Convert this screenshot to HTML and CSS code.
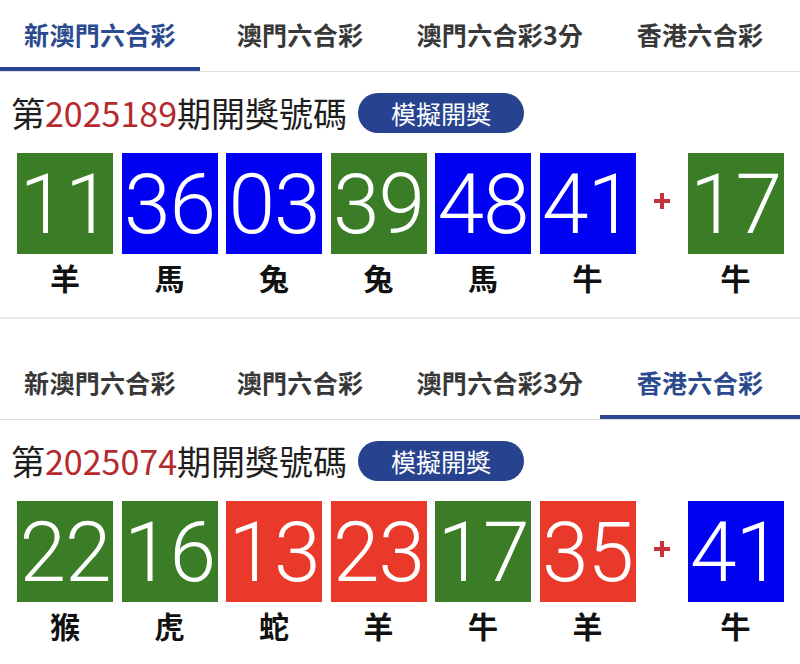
FILE: index.html
```html
<!DOCTYPE html>
<html lang="zh-Hant">
<head>
<meta charset="utf-8">
<title>六合彩開獎</title>
<link rel="stylesheet" href="styles.css">
</head>
<body>
<div class="page">
  <section class="draw">
    <nav class="tabs">
      <div class="tab active">新澳門六合彩</div>
      <div class="tab">澳門六合彩</div>
      <div class="tab">澳門六合彩3分</div>
      <div class="tab">香港六合彩</div>
    </nav>
    <div class="head">
      <h2 class="title">第<span class="issue">2025189</span>期開獎號碼</h2>
      <button class="sim">模擬開獎</button>
    </div>
    <div class="balls">
      <div class="item"><div class="ball green">11</div><div class="zodiac">羊</div></div>
      <div class="item"><div class="ball blue">36</div><div class="zodiac">馬</div></div>
      <div class="item"><div class="ball blue">03</div><div class="zodiac">兔</div></div>
      <div class="item"><div class="ball green">39</div><div class="zodiac">兔</div></div>
      <div class="item"><div class="ball blue">48</div><div class="zodiac">馬</div></div>
      <div class="item"><div class="ball blue">41</div><div class="zodiac">牛</div></div>
      <div class="plus"><span></span></div>
      <div class="item"><div class="ball green">17</div><div class="zodiac">牛</div></div>
    </div>
  </section>
  <section class="draw second">
    <nav class="tabs">
      <div class="tab">新澳門六合彩</div>
      <div class="tab">澳門六合彩</div>
      <div class="tab">澳門六合彩3分</div>
      <div class="tab active">香港六合彩</div>
    </nav>
    <div class="head">
      <h2 class="title">第<span class="issue">2025074</span>期開獎號碼</h2>
      <button class="sim">模擬開獎</button>
    </div>
    <div class="balls">
      <div class="item"><div class="ball green">22</div><div class="zodiac">猴</div></div>
      <div class="item"><div class="ball green">16</div><div class="zodiac">虎</div></div>
      <div class="item"><div class="ball red">13</div><div class="zodiac">蛇</div></div>
      <div class="item"><div class="ball red">23</div><div class="zodiac">羊</div></div>
      <div class="item"><div class="ball green">17</div><div class="zodiac">牛</div></div>
      <div class="item"><div class="ball red">35</div><div class="zodiac">羊</div></div>
      <div class="plus"><span></span></div>
      <div class="item"><div class="ball blue">41</div><div class="zodiac">牛</div></div>
    </div>
  </section>
</div>
</body>
</html>
```
FILE: styles.css
```css
* { box-sizing: border-box; }
html, body { margin: 0; padding: 0; background: #fff; }
body {
  font-family: "Noto Sans CJK TC", "Noto Sans", sans-serif;
  color: #222;
  width: 800px;
  overflow: hidden;
}
.draw {
  border-bottom: 2px solid #e8e8e8;
  padding-bottom: 25px;
}
.draw.second { margin-top: 29px; border-bottom-color: #ececec; padding-bottom: 34px; }
.tabs {
  display: flex;
  height: 72px;
  border-bottom: 1.5px solid #dedede;
}
.tab {
  flex: 1;
  display: flex;
  align-items: center;
  justify-content: center;
  padding-bottom: 4px;
  font-size: 25px;
  font-weight: 700;
  color: #383838;
  letter-spacing: 0.3px;
}
.tab.active {
  color: #2b4a8f;
  box-shadow: inset 0 -4px 0 #2b4592;
}
.head {
  display: flex;
  align-items: center;
  height: 40px;
  margin: 21px 0 0 11px;
}
.title {
  margin: 0;
  font-size: 34px;
  font-weight: 400;
  line-height: 40px;
  color: #1e1e1e;
}
.issue { color: #b52a2f; }
.sim {
  margin-left: 11px;
  width: 166px;
  height: 40px;
  border: none;
  border-radius: 20px;
  background: #27438f;
  color: #fff;
  font-family: "Noto Sans CJK TC", sans-serif;
  font-size: 25px;
  padding: 0;
}
.balls {
  display: flex;
  align-items: flex-start;
  gap: 8.5px;
  margin: 20px 0 0 17px;
}
.item {
  width: 96px;
  display: flex;
  flex-direction: column;
  align-items: center;
}
.ball {
  width: 96px;
  height: 101px;
  display: flex;
  align-items: center;
  justify-content: center;
  color: #fff;
  font-family: Roboto, "Noto Sans", sans-serif;
  font-size: 84px;
  font-weight: 300;
  letter-spacing: -1px;
  line-height: 1;
  padding-top: 2px;
}
.green { background: #3b7d26; }
.blue { background: #0000f2; }
.red { background: #e8392a; }
.zodiac {
  margin-top: 8px;
  font-size: 30px;
  font-weight: 700;
  line-height: 30px;
  color: #111;
}
.plus {
  width: 35px;
  height: 101px;
  display: flex;
  align-items: center;
  justify-content: center;
}
.plus span {
  width: 16px;
  height: 16px;
  margin-top: -6px;
  background:
    linear-gradient(#c8323a, #c8323a) center / 16px 4px no-repeat,
    linear-gradient(#c8323a, #c8323a) center / 4px 16px no-repeat;
}
```
